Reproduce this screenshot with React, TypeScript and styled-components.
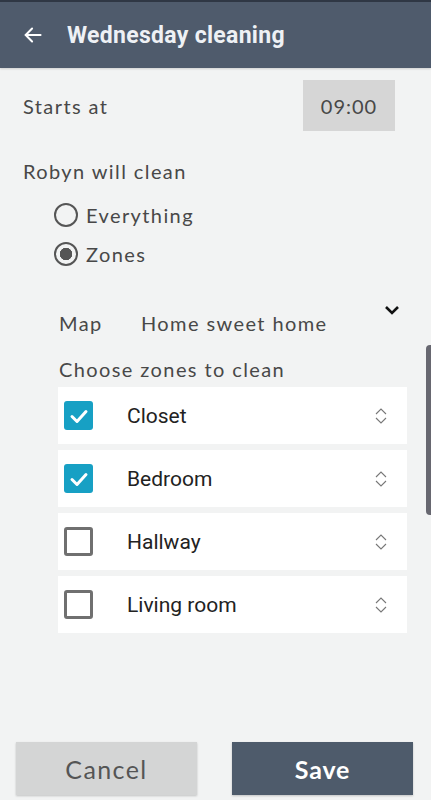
import styled, { createGlobalStyle } from "styled-components"

const GlobalStyle = createGlobalStyle`
    html, body {
        margin: 0;
        padding: 0;
        background: #f2f3f3;
    }
    * {
        box-sizing: border-box;
    }
`

type Zone = {
    name: string
    checked: boolean
}

const zones: Zone[] = [
    { name: 'Closet', checked: true },
    { name: 'Bedroom', checked: true },
    { name: 'Hallway', checked: false },
    { name: 'Living room', checked: false },
]

const BackArrow = () => (
    <svg width="22" height="22" viewBox="0 0 24 24" fill="none" stroke="#fff" strokeWidth="2.2" strokeLinecap="square">
        <path d="M20 12H5" />
        <path d="M11 5l-7 7 7 7" strokeLinecap="round" strokeLinejoin="miter" />
    </svg>
)

const ChevronDown = () => (
    <svg width="16" height="10" viewBox="0 0 16 10" fill="none" stroke="#111" strokeWidth="2.6">
        <path d="M2 2l6 6 6-6" />
    </svg>
)

const UpDown = () => (
    <svg width="14" height="20" viewBox="0 0 14 20" fill="none" stroke="#777" strokeWidth="1.1">
        <path d="M2 8l5-5 5 5" />
        <path d="M2 12l5 5 5-5" />
    </svg>
)

const Tick = () => (
    <svg width="22" height="22" viewBox="0 0 22 22" fill="none" stroke="#fff" strokeWidth="3" strokeLinecap="round" strokeLinejoin="round">
        <path d="M4 11.5l5 5 9-10" />
    </svg>
)

export default function App() {
    return (
        <StyledPage>
            <GlobalStyle />
            <StyledHeader>
                <StyledBack><BackArrow /></StyledBack>
                <StyledTitle>Wednesday cleaning</StyledTitle>
            </StyledHeader>

            <StyledContent>
                <StyledTimeRow>
                    <StyledLabel>Starts at</StyledLabel>
                    <StyledTimeBox>09:00</StyledTimeBox>
                </StyledTimeRow>

                <StyledSectionLabel>Robyn will clean</StyledSectionLabel>
                <StyledRadioGroup>
                    <StyledRadioRow>
                        <StyledRadio $checked={false} />
                        <StyledLabel>Everything</StyledLabel>
                    </StyledRadioRow>
                    <StyledRadioRow>
                        <StyledRadio $checked={true} />
                        <StyledLabel>Zones</StyledLabel>
                    </StyledRadioRow>
                </StyledRadioGroup>

                <StyledZonesBlock>
                    <StyledMapRow>
                        <StyledMapKey>Map</StyledMapKey>
                        <StyledLabel>Home sweet home</StyledLabel>
                        <StyledMapChevron><ChevronDown /></StyledMapChevron>
                    </StyledMapRow>
                    <StyledLabel>Choose zones to clean</StyledLabel>
                    <StyledZoneList>
                        {zones.map(z => (
                            <StyledZoneRow key={z.name}>
                                <StyledCheckbox $checked={z.checked}>
                                    {z.checked && <Tick />}
                                </StyledCheckbox>
                                <StyledZoneName>{z.name}</StyledZoneName>
                                <UpDown />
                            </StyledZoneRow>
                        ))}
                    </StyledZoneList>
                </StyledZonesBlock>
            </StyledContent>

            <StyledFooter>
                <StyledButton $primary={false}>Cancel</StyledButton>
                <StyledButton $primary={true}>Save</StyledButton>
            </StyledFooter>

            <StyledScrollThumb />
        </StyledPage>
    )
}

const StyledPage = styled.div`
    position: relative;
    width: 431px;
    height: 800px;
    display: flex;
    flex-direction: column;
    background: #f2f3f3;
    font-family: Lato, "Noto Sans", sans-serif;
    overflow: hidden;
`

const StyledHeader = styled.header`
    height: 68px;
    display: flex;
    align-items: center;
    padding-left: 22px;
    background: #4f5b6c;
    border-top: 2px solid #2f3744;
    box-shadow: 0 1px 2px rgba(0, 0, 0, 0.15);
`

const StyledBack = styled.div`
    display: flex;
    width: 45px;
`

const StyledTitle = styled.h1`
    margin: 0;
    font-family: Roboto, sans-serif;
    font-weight: 700;
    font-size: 23px;
    color: #eef1f5;
    letter-spacing: 0.3px;
`

const StyledContent = styled.main`
    flex: 1;
    padding: 12px 36px 0 23px;
    display: flex;
    flex-direction: column;
`

const StyledLabel = styled.span`
    font-size: 20px;
    line-height: 24px;
    color: #484848;
    letter-spacing: 1.4px;
`

const StyledTimeRow = styled.div`
    display: flex;
    justify-content: space-between;
    align-items: center;
    height: 51px;
`

const StyledTimeBox = styled.div`
    width: 92px;
    height: 51px;
    display: flex;
    align-items: center;
    justify-content: center;
    background: #d6d6d6;
    font-size: 20px;
    color: #484848;
    letter-spacing: 1px;
`

const StyledSectionLabel = styled(StyledLabel)`
    margin-top: 28px;
`

const StyledRadioGroup = styled.div`
    display: flex;
    flex-direction: column;
    gap: 15px;
    margin-top: 20px;
    padding-left: 31px;
`

const StyledRadioRow = styled.div`
    display: flex;
    align-items: center;
    gap: 8px;
`

const StyledRadio = styled.span<{ $checked: boolean }>`
    width: 24px;
    height: 24px;
    border-radius: 50%;
    border: 2px solid #555;
    background: ${p => p.$checked ? 'radial-gradient(circle, #555 0 6px, transparent 6.5px)' : 'transparent'};
`

const StyledZonesBlock = styled.div`
    display: flex;
    flex-direction: column;
    padding-left: 36px;
    margin-top: 45px;
`

const StyledMapRow = styled.div`
    display: flex;
    align-items: center;
    margin-bottom: 22px;
`

const StyledMapKey = styled(StyledLabel)`
    width: 82px;
`

const StyledMapChevron = styled.div`
    margin-left: auto;
    margin-right: -5px;
    align-self: flex-start;
    margin-top: -6px;
    display: flex;
`

const StyledZoneList = styled.div`
    display: flex;
    flex-direction: column;
    gap: 6px;
    margin-top: 6px;
    margin-left: -1px;
    margin-right: -12px;
`

const StyledZoneRow = styled.div`
    height: 57px;
    display: flex;
    align-items: center;
    padding: 0 19px 0 6px;
    background: #fff;
`

const StyledCheckbox = styled.span<{ $checked: boolean }>`
    width: 29px;
    height: 29px;
    border-radius: 3px;
    display: flex;
    align-items: center;
    justify-content: center;
    background: ${p => p.$checked ? '#17a0c4' : 'transparent'};
    border: ${p => p.$checked ? 'none' : '3px solid #707070'};
`

const StyledZoneName = styled.span`
    flex: 1;
    margin-left: 34px;
    font-family: Roboto, sans-serif;
    font-size: 21px;
    color: #222;
`

const StyledFooter = styled.footer`
    display: flex;
    justify-content: space-between;
    padding: 0 18px 5px 16px;
`

const StyledButton = styled.button<{ $primary: boolean }>`
    width: 181px;
    height: 53px;
    border: none;
    font-family: Lato, sans-serif;
    font-size: 25px;
    letter-spacing: ${p => p.$primary ? '0.8px' : '1.4px'};
    font-weight: ${p => p.$primary ? 700 : 400};
    color: ${p => p.$primary ? '#fff' : '#555'};
    background: ${p => p.$primary ? '#4e5b6b' : '#d4d5d5'};
    box-shadow: 0 1px 2px rgba(0, 0, 0, 0.2);
`

const StyledScrollThumb = styled.div`
    position: absolute;
    right: 0;
    top: 345px;
    width: 5px;
    height: 170px;
    border-radius: 4px 0 0 4px;
    background: #676770;
`
